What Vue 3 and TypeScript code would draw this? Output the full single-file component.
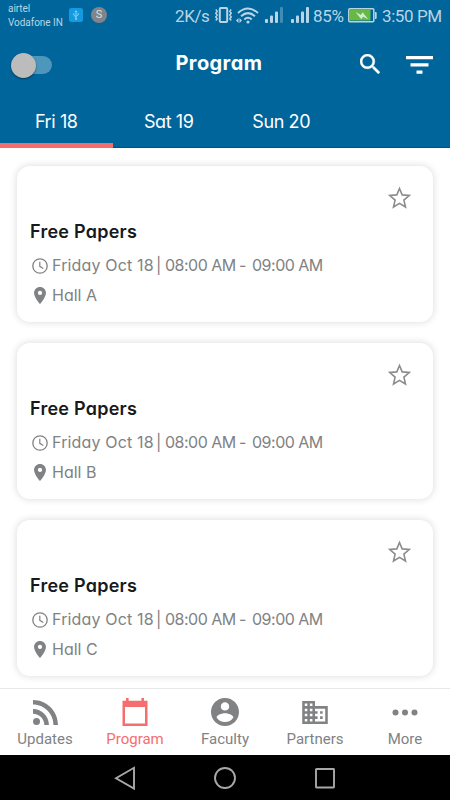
<script setup lang="ts">
import { ref } from 'vue'

interface Session {
  title: string
  day: string
  start: string
  end: string
  hall: string
}

const days = ['Fri 18', 'Sat 19', 'Sun 20']
const activeDay = ref(0)

const sessions: Session[] = ['Hall A', 'Hall B', 'Hall C'].map((hall) => ({
  title: 'Free Papers',
  day: 'Friday Oct 18',
  start: '08:00 AM',
  end: '09:00 AM',
  hall,
}))

const links = ['Updates', 'Program', 'Faculty', 'Partners', 'More']
const activeLink = ref('Program')
</script>

<template>
  <div class="screen">
    <header class="header">
      <div class="status">
        <div class="carrier"><span>airtel</span><span>Vodafone IN</span></div>
        <svg class="usb" width="14" height="14" viewBox="0 0 14 14">
          <rect width="14" height="14" rx="2.5" fill="#129be0" />
          <path d="M7 3v8M4.8 5.2v2L7 9M9.2 5v1.8L7 8.3" fill="none" stroke="#8fd0f3" stroke-width="1" />
          <path d="M5.6 4 7 2.2 8.4 4z" fill="#8fd0f3" />
          <circle cx="7" cy="11" r="1" fill="#8fd0f3" />
        </svg>
        <span class="badge">S</span>
        <span class="speed">2K/s</span>
        <svg class="vibrate" width="17" height="16" viewBox="0 0 17 16" fill="none" stroke="#b9d5e5">
          <rect x="4.800" y="1" width="7.400" height="14" rx="1" stroke-width="2" />
          <path d="m.8 2.500 1.400 1.800L.8 6.200l1.400 1.900L.8 10l1.400 1.800-1.400 1.700M16.200 2.500l-1.400 1.800 1.400 1.900-1.400 1.900 1.400 1.900-1.400 1.800 1.400 1.700" stroke-width="1.500" />
        </svg>
        <svg class="wifi" width="23" height="17" viewBox="0 0 23 17" fill="none" stroke="#b9d5e5" stroke-width="2">
          <path d="M2 6Q12 -3 22 6M5 9.300Q12 3 19 9.300M8.300 12.400Q12 9 15.700 12.400" />
          <circle cx="12" cy="15" r="1.600" fill="#b9d5e5" stroke="none" />
          <path d="M0 13.500 2.500 11v5zM6 13.500 3.500 11v5z" fill="#b9d5e5" stroke="none" />
        </svg>
        <svg class="signal" width="18" height="16" viewBox="0 0 18 16" fill="#b9d5e5">
          <rect y="12" width="3" height="4" rx="1" /><rect x="5" y="8.500" width="3" height="7.500" rx="1" />
          <rect x="10" y="4.500" width="3" height="11.500" rx="1" /><rect x="15" width="3" height="16" rx="1" opacity=".35" />
        </svg>
        <svg class="signal two" width="18" height="16" viewBox="0 0 18 16" fill="#b9d5e5">
          <rect y="12" width="3" height="4" rx="1" /><rect x="5" y="8.500" width="3" height="7.500" rx="1" />
          <rect x="10" y="4.500" width="3" height="11.500" rx="1" /><rect x="15" width="3" height="16" rx="1" />
        </svg>
        <span class="percent">85%</span>
        <svg class="battery" width="29" height="15" viewBox="0 0 29 15">
          <rect x=".8" y=".8" width="25" height="13" rx="1" fill="#00659b" stroke="#b9d5e5" stroke-width="1.500" />
          <rect x="2" y="2" width="20.500" height="10.500" fill="#67b944" />
          <path d="M27 4h.7q1 0 1 1v5q0 1-1 1H27z" fill="#b9d5e5" />
          <path d="m7.500 4 5.500 3 1.500-2.700 5.800 7-5.300-2.600-1.700 2.500z" fill="#d5e8df" />
        </svg>
        <span class="time">3:50 PM</span>
      </div>

      <div class="toolbar">
        <button class="toggle" aria-label="Toggle"><i></i></button>
        <h1>Program</h1>
        <svg class="search" width="20" height="20" viewBox="3 3 17.490 17.490" fill="#fff" stroke="#fff" stroke-width=".3">
          <path d="M15.500 14h-.79l-.28-.27A6.471 6.471 0 0 0 16 9.500 6.500 6.500 0 1 0 9.500 16c1.610 0 3.090-.59 4.230-1.570l.27.28v.79l5 4.990L20.490 19l-4.990-5zm-6 0C7.010 14 5 11.990 5 9.500S7.010 5 9.500 5 14 7.010 14 9.500 11.990 14 9.500 14z" />
        </svg>
        <svg class="filter" width="27" height="18" viewBox="0 0 27 18" fill="#fff">
          <path d="M0 0h27v3.200H0zM4.500 7.200h18v3.200h-18zM10.500 14.400h6v3.400h-6z" />
        </svg>
      </div>

      <nav class="days">
        <button v-for="(day, i) in days" :key="day" :class="{ active: i === activeDay }" @click="activeDay = i">
          <span>{{ day }}</span>
        </button>
      </nav>
    </header>

    <main class="list">
      <article v-for="s in sessions" :key="s.hall" class="card">
        <svg class="star" width="23" height="23" viewBox="0 0 23 23" fill="none" stroke="#8a8c8e" stroke-width="1.600">
          <path d="m11.500 2.500 2.700 6.400 7 .6-5.300 4.600 1.600 6.900-6-3.600-6 3.600 1.600-6.900-5.300-4.600 7-.6z" />
        </svg>
        <h2>{{ s.title }}</h2>
        <p class="row when">
          <svg width="16" height="16" viewBox="0 0 16 16" fill="none" stroke="#808284" stroke-width="1.300">
            <circle cx="8" cy="8" r="7.200" /><path d="M7.800 3.700v4.600l3.500 2.100" stroke-width="1.200" />
          </svg>
          <span class="day">{{ s.day }}</span><span class="bar">|</span><span class="hour">{{ s.start }}</span><span class="dash">-</span><span class="hour">{{ s.end }}</span>
        </p>
        <p class="row where">
          <svg width="12" height="17" viewBox="5 2 14 20" fill="#808284">
            <path d="M12 2C8.130 2 5 5.130 5 9c0 5.250 7 13 7 13s7-7.750 7-13c0-3.870-3.130-7-7-7zm0 9.500a2.500 2.500 0 0 1 0-5 2.500 2.500 0 0 1 0 5z" />
          </svg>
          <span>{{ s.hall }}</span>
        </p>
      </article>
    </main>

    <nav class="tabbar">
      <button v-for="link in links" :key="link" :class="{ active: link === activeLink }" @click="activeLink = link">
        <span class="glyph">
          <svg v-if="link === 'Updates'" width="25" height="25" viewBox="4 4.440 15.560 15.560">
            <circle cx="6.180" cy="17.820" r="2.180" />
            <path d="M4 4.440v2.830c7.030 0 12.730 5.700 12.730 12.730h2.830c0-8.590-6.970-15.560-15.560-15.560zm0 5.660v2.830c3.900 0 7.070 3.170 7.070 7.070h2.830c0-5.470-4.430-9.900-9.900-9.900z" />
          </svg>
          <svg v-else-if="link === 'Program'" width="26" height="28" viewBox="0 0 26 28">
            <path fill-rule="evenodd" d="M4 0h2.600v2.800h12.800V0H22v2.800h3.500V28H.5V2.800H4zM3 9v16.400h20V9z" />
          </svg>
          <svg v-else-if="link === 'Faculty'" width="28" height="28" viewBox="2 2 20 20">
            <path d="M12 2C6.480 2 2 6.480 2 12s4.480 10 10 10 10-4.480 10-10S17.520 2 12 2zm0 3c1.660 0 3 1.340 3 3s-1.340 3-3 3-3-1.340-3-3 1.340-3 3-3zm0 14.200a7.200 7.200 0 0 1-6-3.220c.03-1.990 4-3.080 6-3.080 1.990 0 5.970 1.090 6 3.080a7.200 7.200 0 0 1-6 3.220z" />
          </svg>
          <svg v-else-if="link === 'Partners'" width="26" height="23" viewBox="2 3 20 18">
            <path d="M12 7V3H2v18h20V7H12zM6 19H4v-2h2v2zm0-4H4v-2h2v2zm0-4H4V9h2v2zm0-4H4V5h2v2zm4 12H8v-2h2v2zm0-4H8v-2h2v2zm0-4H8V9h2v2zm0-4H8V5h2v2zm10 12h-8v-2h2v-2h-2v-2h2v-2h-2V9h8v10zm-2-8h-2v2h2v-2zm0 4h-2v2h2v-2z" />
          </svg>
          <svg v-else width="26" height="7" viewBox="0 0 26 7">
            <circle cx="3.500" cy="3.500" r="3" /><circle cx="13" cy="3.500" r="3" /><circle cx="22.500" cy="3.500" r="3" />
          </svg>
        </span>
        <span class="label">{{ link }}</span>
      </button>
    </nav>

    <footer class="system">
      <svg width="22" height="24" viewBox="0 0 22 24"><path d="M20 1.800v20.800L2 12.200z" /></svg>
      <svg width="24" height="24" viewBox="0 0 24 24"><circle cx="12" cy="12" r="10" /></svg>
      <svg width="22" height="24" viewBox="0 0 22 24"><rect x="2" y="3" width="18" height="18.500" rx=".5" /></svg>
    </footer>
  </div>
</template>

<style>
body {
  margin: 0;
}
</style>

<style scoped>
.screen {
  width: 450px;
  height: 800px;
  display: flex;
  flex-direction: column;
  overflow: hidden;
  background: #fff;
  font-family: Inter, Roboto, sans-serif;
  font-feature-settings: 'cv11';
}
button {
  border: 0;
  padding: 0;
  background: none;
  font: inherit;
  color: inherit;
  font-feature-settings: inherit;
}
h1,
h2,
p {
  margin: 0;
}
svg {
  flex: none;
  display: block;
}
.header {
  flex: none;
  height: 148px;
  background: #00659b;
  box-sizing: border-box;
  border-bottom: 1px solid #00508a;
  color: #fff;
}
.status {
  height: 30px;
  display: flex;
  align-items: center;
  color: #b9d5e5;
  font-family: Roboto, sans-serif;
  font-size: 17px;
  white-space: nowrap;
}
.carrier {
  width: 61px;
  padding-left: 8px;
  display: flex;
  flex-direction: column;
  font-size: 10px;
  line-height: 14px;
  letter-spacing: -0.050px;
  padding-top: 1px;
}
.usb {
  height: 14px;
}
.badge {
  width: 16px;
  height: 16px;
  margin-left: 8px;
  border-radius: 50%;
  background: #818488;
  color: #d5e0e6;
  font-size: 11px;
  line-height: 16px;
  text-align: center;
}
.speed {
  width: 34px;
  margin: 1px 6px 0 68px;
  letter-spacing: -0.400px;
}
.wifi {
  margin-left: 4px;
}
.signal {
  margin-left: 6px;
}
.signal.two {
  margin-left: 8px;
}
.percent {
  width: 31px;
  margin: 1px 4px 0 4px;
  letter-spacing: -0.300px;
}
.time {
  margin: 1px 0 0 5px;
  letter-spacing: -0.400px;
}
.toolbar {
  height: 66px;
  display: flex;
  align-items: center;
}
.toggle {
  width: 40px;
  height: 18px;
  margin: 4px 0 0 12px;
  border-radius: 9px;
  background: #4e96bb;
  display: flex;
  align-items: center;
}
.toggle i {
  width: 25px;
  height: 25px;
  margin-left: -1.500px;
  border-radius: 50%;
  background: #bcbcbc;
  box-shadow: 0 1px 2px rgba(0, 0, 0, 0.45);
}
.toolbar h1 {
  width: 88px;
  margin-left: 123.500px;
  padding-bottom: 1px;
  font-size: 20px;
  line-height: 24px;
  font-weight: 700;
  letter-spacing: 0.400px;
}
.search {
  margin: 2px 0 0 96px;
}
.filter {
  margin: 3px 0 0 26px;
}
.days {
  height: 52px;
  display: flex;
}
.days button {
  width: 112.500px;
  height: 52px;
  border-bottom: 5px solid transparent;
  box-sizing: border-box;
  font-size: 18px;
  line-height: 24px;
  padding-top: 5px;
  letter-spacing: -0.400px;
}
.days button.active {
  border-color: #f56e6e;
}
.list {
  flex: 1;
  min-height: 0;
  overflow: hidden;
  padding: 18px 17px 0;
  display: flex;
  flex-direction: column;
  gap: 21px;
}
.card {
  flex: none;
  height: 156px;
  box-sizing: border-box;
  padding: 21px 13px 0;
  border-radius: 13px;
  background: #fff;
  box-shadow: 0 0 7px 1px rgba(0, 0, 0, 0.12);
  display: flex;
  flex-direction: column;
}
.star {
  align-self: flex-end;
  margin: -1px 9px 0 0;
}
.card h2 {
  margin-top: 11px;
  font-size: 18px;
  line-height: 24px;
  font-weight: 600;
  letter-spacing: 0.250px;
  color: #17191c;
}
.row {
  display: flex;
  align-items: center;
  height: 24px;
  margin-top: 9px;
  font-size: 16px;
  color: #808284;
  white-space: nowrap;
}
.when svg {
  margin: 2px 4px 0 2px;
}
.where {
  margin-top: 6px;
}
.where svg {
  margin: 1px 6px 0 4px;
}
.day {
  width: 104px;
  letter-spacing: 0.150px;
}
.bar {
  width: 9px;
}
.hour {
  width: 74px;
  letter-spacing: -0.500px;
}
.dash {
  width: 13px;
}
.tabbar {
  flex: none;
  height: 67px;
  box-sizing: border-box;
  border-top: 1px solid #e8e8e8;
  display: flex;
  background: #fff;
  color: #808284;
}
.tabbar button {
  flex: 1;
  display: flex;
  flex-direction: column;
  align-items: center;
  padding-top: 9px;
}
.tabbar button.active {
  color: #f56e6e;
}
.glyph {
  height: 28px;
  display: flex;
  align-items: center;
  fill: currentColor;
}
.label {
  margin-top: 3px;
  font-family: Roboto, sans-serif;
  font-size: 15px;
  line-height: 20px;
}
.system {
  flex: none;
  height: 45px;
  background: #000;
  display: flex;
  justify-content: center;
  align-items: center;
  gap: 77px;
  fill: none;
  stroke: #a8a8a8;
  stroke-width: 1.900;
}
</style>
